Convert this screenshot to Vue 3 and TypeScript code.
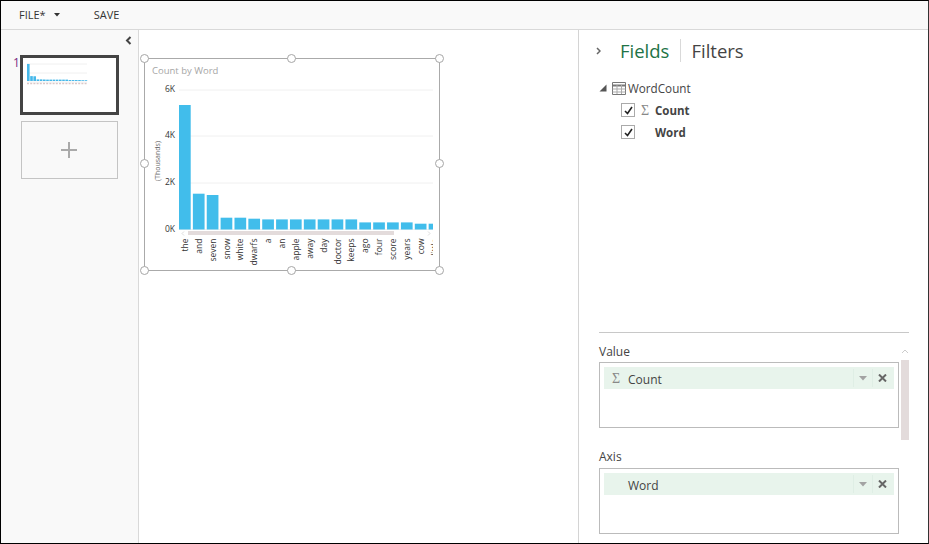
<script setup lang="ts">
interface Bar {
  word: string
  top: number
}

const bars: Bar[] = [
  { word: 'the', top: 105 },
  { word: 'and', top: 193.7 },
  { word: 'seven', top: 195 },
  { word: 'snow', top: 217.7 },
  { word: 'white', top: 217.7 },
  { word: 'dwarfs', top: 218.7 },
  { word: 'a', top: 219.4 },
  { word: 'an', top: 219.4 },
  { word: 'apple', top: 219.4 },
  { word: 'away', top: 219.4 },
  { word: 'day', top: 219.4 },
  { word: 'doctor', top: 219.4 },
  { word: 'keeps', top: 219.4 },
  { word: 'ago', top: 222.4 },
  { word: 'four', top: 222.4 },
  { word: 'score', top: 222.4 },
  { word: 'years', top: 222.4 },
  { word: 'cow', top: 223.7 },
  { word: 'little', top: 223.7 },
]

// chart svg is placed at page coordinates (144, 58)
const originX = 144
const originY = 58
const baseY = 229.5 - originY
const barX = (i: number) => 179 + i * 13.87 - originX
const barH = (b: Bar) => 229.5 - b.top

const ticks = [
  { label: '6K', y: 90 - originY },
  { label: '4K', y: 136 - originY },
  { label: '2K', y: 183 - originY },
  { label: '0K', y: 229.5 - originY },
]

const handles = ['tl', 'tm', 'tr', 'ml', 'mr', 'bl', 'bm', 'br']

const wells = [
  { title: 'Value', field: 'Count', sigma: true },
  { title: 'Axis', field: 'Word', sigma: false },
]
</script>

<template>
  <div class="app">
    <header class="toolbar">
      <span class="menu">FILE*</span>
      <svg class="caret" width="6" height="4" viewBox="0 0 6 4"><path d="M0 0h6L3 3.5z" fill="#333" /></svg>
      <span class="menu save">SAVE</span>
    </header>

    <div class="body">
      <aside class="pages">
        <svg class="collapse" width="7" height="9" viewBox="0 0 7 9">
          <path d="M5.5 1L2 4.5 5.5 8" fill="none" stroke="#444" stroke-width="2" />
        </svg>
        <div class="page-row">
          <span class="page-no">1</span>
          <div class="thumb">
            <svg width="92" height="53" viewBox="0 0 92 53">
              <path d="M4 6h60M4 15h60M4 24h60" stroke="#f0f0f0" stroke-width="1" />
              <rect
                v-for="(b, i) in bars"
                :key="b.word"
                :x="4 + i * 3.2"
                :y="23 - barH(b) * 0.137"
                width="2.6"
                :height="barH(b) * 0.137"
                fill="#45b8ea"
              />
              <path d="M4 25.5h60" stroke="#d9c8c8" stroke-width="1.5" stroke-dasharray="2 1.2" />
            </svg>
          </div>
        </div>
        <div class="add-page">
          <svg width="16" height="16" viewBox="0 0 16 16"><path d="M8 0v16M0 8h16" stroke="#aaa" stroke-width="2" /></svg>
        </div>
      </aside>

      <main class="canvas">
        <div class="visual">
          <span v-for="h in handles" :key="h" class="handle" :class="h"></span>
          <svg class="chart" width="296" height="213" viewBox="0 0 296 213">
            <defs>
              <clipPath id="plot"><rect x="0" y="0" width="289" height="213" /></clipPath>
            </defs>
            <text x="8" y="16" class="chart-title">Count by Word</text>
            <text class="unit" transform="translate(16 103) rotate(-90)" text-anchor="middle">(Thousands)</text>
            <g v-for="t in ticks" :key="t.label">
              <line x1="35" x2="289" :y1="t.y" :y2="t.y" stroke="#f0f0f0" />
              <text x="31" :y="t.y + 2" text-anchor="end" class="tick">{{ t.label }}</text>
            </g>
            <g clip-path="url(#plot)">
              <rect
                v-for="(b, i) in bars"
                :key="b.word"
                :x="barX(i)"
                :y="b.top - originY"
                width="11.7"
                :height="barH(b)"
                fill="#41bdeb"
              />
              <text
                v-for="(b, i) in bars"
                :key="b.word + '-label'"
                class="tick"
                text-anchor="end"
                :transform="`translate(${barX(i) + 9} ${baseY + 9}) rotate(-90)`"
              >{{ b.word }}</text>
            </g>
            <rect x="44" y="173" width="206" height="4" fill="#e3dbdb" />
            <path d="M40 173.5l-2 2 2 2" fill="none" stroke="#ddd" />
            <path d="M284 173.5l2 2-2 2" fill="none" stroke="#ddd" />
          </svg>
        </div>
      </main>

      <aside class="fields">
        <div class="tabs">
          <svg width="5" height="8" viewBox="0 0 5 8"><path d="M1 1l3 3-3 3" fill="none" stroke="#666" stroke-width="1.5" /></svg>
          <span class="tab active">Fields</span>
          <span class="tab-sep"></span>
          <span class="tab">Filters</span>
        </div>

        <div class="tree">
          <div class="tree-head">
            <svg width="8" height="8" viewBox="0 0 8 8"><path d="M7.5 0.5v7h-7z" fill="#555" /></svg>
            <svg class="table-icon" width="14" height="13" viewBox="0 0 14 13">
              <path d="M.5.5h13v12H.5z" fill="#fff" stroke="#777" />
              <path d="M.5 3.5h13" stroke="#777" stroke-width="2" />
              <path d="M.5 7h13M.5 10h13M5 3v9M9.5 3v9" stroke="#aaa" />
            </svg>
            <span>WordCount</span>
          </div>
          <div class="tree-row">
            <span class="check"><svg width="11" height="11" viewBox="0 0 11 11"><path d="M2 6l2.5 2.5L9 2" fill="none" stroke="#222" stroke-width="1.6" /></svg></span>
            <span class="sigma">Σ</span>
            <b>Count</b>
          </div>
          <div class="tree-row">
            <span class="check"><svg width="11" height="11" viewBox="0 0 11 11"><path d="M2 6l2.5 2.5L9 2" fill="none" stroke="#222" stroke-width="1.6" /></svg></span>
            <span class="sigma"></span>
            <b>Word</b>
          </div>
        </div>

        <div class="well-area">
          <div class="wells">
            <section v-for="w in wells" :key="w.title" class="well">
              <div class="well-title">{{ w.title }}</div>
              <div class="well-box">
                <div class="pill">
                  <span class="sigma">{{ w.sigma ? 'Σ' : '' }}</span>
                  <span class="pill-text">{{ w.field }}</span>
                  <span class="pill-btn">
                    <svg width="8" height="5" viewBox="0 0 8 5"><path d="M0 0h8L4 4.5z" fill="#a3a3a3" /></svg>
                  </span>
                  <span class="pill-btn">
                    <svg width="9" height="8" viewBox="0 0 9 8"><path d="M1 .5l7 7M8 .5l-7 7" stroke="#666" stroke-width="2" /></svg>
                  </span>
                </div>
              </div>
            </section>
          </div>
          <div class="scroll">
            <svg width="8" height="5" viewBox="0 0 8 5"><path d="M1 4l3-3 3 3" fill="none" stroke="#ccc" /></svg>
            <div class="scroll-thumb"></div>
          </div>
        </div>
      </aside>
    </div>
  </div>
</template>

<style>
html,
body {
  margin: 0;
  background: #fff;
}
</style>

<style scoped>
.app {
  box-sizing: border-box;
  width: 929px;
  height: 544px;
  border: 1px solid #000;
  border-right-color: #333;
  display: flex;
  flex-direction: column;
  overflow: hidden;
  font-family: "Open Sans", "Noto Sans", sans-serif;
  font-size: 12px;
  color: #444;
  background: #fff;
}

.toolbar {
  flex: none;
  box-sizing: border-box;
  height: 29px;
  display: flex;
  align-items: center;
  padding: 0 0 2px 18px;
  background: #f9f9f9;
  border-bottom: 1px solid #d9d9d9;
}

.menu {
  font-size: 11px;
  color: #333;
}

.caret {
  margin-left: 8px;
  margin-top: 2px;
}

.save {
  margin-left: 34px;
}

.body {
  flex: 1;
  display: flex;
  min-height: 0;
}

.pages {
  position: relative;
  flex: none;
  box-sizing: border-box;
  width: 138px;
  padding: 25px 0 0 12px;
  background: #f9f9f9;
  border-right: 1px solid #d9d9d9;
}

.collapse {
  position: absolute;
  top: 6px;
  right: 6px;
}

.page-row {
  display: flex;
  align-items: flex-start;
}

.page-no {
  width: 7px;
  margin-top: -1px;
  color: #7a2a82;
  font-size: 12px;
}

.thumb {
  box-sizing: border-box;
  width: 99px;
  height: 60px;
  border: 3px solid #444;
  background: #fff;
}

.thumb svg {
  display: block;
}

.add-page {
  box-sizing: border-box;
  width: 97px;
  height: 58px;
  margin: 6px 0 0 8px;
  padding-right: 1px;
  border: 1px solid #c4c4c4;
  display: flex;
  align-items: center;
  justify-content: center;
}

.canvas {
  flex: none;
  box-sizing: border-box;
  width: 440px;
  padding: 28px 0 0 5px;
  border-right: 1px solid #d4d4d4;
}

.visual {
  position: relative;
  box-sizing: border-box;
  width: 296px;
  height: 213px;
  border: 1px solid #aaa;
}

.chart {
  display: block;
  margin: -1px;
}

.chart-title {
  font-size: 9.5px;
  fill: #a6a6a6;
}

.unit {
  font-size: 7px;
  fill: #666;
}

.tick {
  font-size: 8.5px;
  fill: #333;
}

.handle {
  position: absolute;
  box-sizing: border-box;
  width: 9px;
  height: 9px;
  border: 1px solid #a6a6a6;
  border-radius: 50%;
  background: #fff;
  z-index: 1;
}

.tl,
.tm,
.tr {
  top: -5px;
}

.ml,
.mr {
  top: 100px;
}

.bl,
.bm,
.br {
  bottom: -5px;
}

.tl,
.ml,
.bl {
  left: -5px;
}

.tm,
.bm {
  left: 142px;
}

.tr,
.mr,
.br {
  right: -5px;
}

.fields {
  flex: 1;
  min-width: 0;
  display: flex;
  flex-direction: column;
  padding-left: 20px;
}

.tabs {
  display: flex;
  align-items: center;
  height: 41px;
}

.tabs svg {
  margin-left: -3px;
  margin-right: 19px;
}

.tab {
  font-size: 18.5px;
  line-height: 26px;
  color: #444;
}

.tab.active {
  color: #217346;
}

.tab-sep {
  width: 1px;
  height: 23px;
  margin: 0 10px 0 11px;
  background: #d9d9d9;
}

.tree {
  margin-top: 9px;
}

.tree-head {
  display: flex;
  align-items: center;
  height: 16px;
  font-size: 11.7px;
}

.table-icon {
  margin: 0 2px 0 5px;
}

.tree-row {
  display: flex;
  align-items: center;
  height: 22px;
  padding-left: 22px;
  font-size: 11.5px;
  color: #444;
}

.tree-head + .tree-row {
  margin-top: 3px;
}

.check {
  box-sizing: border-box;
  width: 14px;
  height: 14px;
  border: 1px solid #aaa;
  display: flex;
  align-items: center;
  justify-content: center;
  background: #fff;
}

.sigma {
  flex: none;
  width: 20px;
  padding-top: 2px;
  text-align: center;
  color: #888;
  font-family: "Liberation Serif", serif;
  font-size: 14px;
  line-height: 16px;
}

.well-area {
  margin-top: auto;
  width: 310px;
  box-sizing: border-box;
  border-top: 1px solid #c8c8c8;
  display: flex;
  height: 211px;
}

.wells {
  width: 300px;
  flex: none;
}

.well-title {
  height: 18px;
  line-height: 18px;
  margin-top: 10px;
  color: #444;
}

.well + .well {
  margin-top: 20px;
}

.well-box {
  box-sizing: border-box;
  height: 66px;
  margin-top: 1px;
  padding: 4px;
  border: 1px solid #bbb;
}

.well + .well .well-box {
  margin-top: 2px;
}

.pill {
  display: flex;
  align-items: center;
  height: 22px;
  padding-left: 7px;
  background: #e8f4ec;
}

.pill .sigma {
  width: 10px;
  margin-right: 7px;
}

.pill-text {
  flex: 1;
  padding-top: 2px;
}

.pill-btn {
  box-sizing: border-box;
  width: 19px;
  height: 18px;
  border-left: 1px solid #dfeee5;
  display: flex;
  align-items: center;
  justify-content: center;
}

.pill-btn + .pill-btn {
  width: 22px;
  padding-right: 3px;
}

.scroll {
  flex: none;
  width: 8px;
  margin-left: 2px;
  padding-top: 16px;
}

.scroll svg {
  display: block;
  margin: 0 auto 6px;
}

.scroll-thumb {
  height: 80px;
  background: #e3dbdb;
}
</style>
